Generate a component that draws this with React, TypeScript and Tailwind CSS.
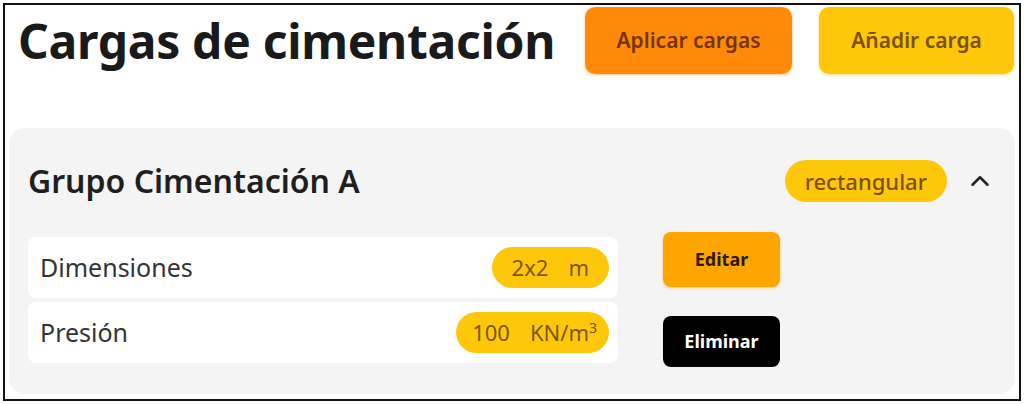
import { ChevronUp } from 'lucide-react';

const FONT = "font-['Noto_Sans',sans-serif]";

function Pill({ value, unit, className = '' }: { value: string; unit: React.ReactNode; className?: string }) {
  return (
    <span className={`h-[41px] rounded-full bg-[#ffc709] text-[#7a5800] text-[22px] flex items-center gap-[20px] ${className}`}>
      <span>{value}</span>
      <span>{unit}</span>
    </span>
  );
}

function Row({ label, children }: { label: string; children: React.ReactNode }) {
  return (
    <div className="h-[61px] bg-white rounded-lg pl-3 pr-[9px] flex items-center justify-between">
      <span className="text-[25px] text-[#333]">{label}</span>
      {children}
    </div>
  );
}

export default function App() {
  return (
    <div className={`${FONT} bg-white w-[1024px] h-[404px] p-[3px]`}>
      <div className="h-[398px] border-2 border-[#111] flex flex-col">
        {/* Header */}
        <div className="flex items-start pt-[2px] pl-[13px] pr-[5px] h-[123px]">
          <h1 className="text-[48px] tracking-[-0.3px] font-bold text-[#1a1a1a] leading-[60px] mt-[4px] flex-1">
            Cargas de cimentación
          </h1>
          <button className="w-[207px] h-[67px] rounded-[10px] bg-[#ff8a0a] text-[#7a3300] text-[21px] font-semibold shadow-[0_1px_3px_rgba(255,140,0,0.5)]">
            Aplicar cargas
          </button>
          <button className="w-[195px] h-[67px] ml-[27px] rounded-[10px] bg-[#ffc709] text-[#7a5200] text-[21px] font-semibold shadow-[0_1px_3px_rgba(255,199,9,0.5)]">
            Añadir carga
          </button>
        </div>

        {/* Group panel */}
        <div className="mx-[4px] h-[266px] bg-[#f4f4f4] rounded-2xl pl-[19px] pr-[20px] pt-[32px]">
          <div className="flex items-center h-[42px]">
            <h2 className="text-[32px] font-semibold text-[#1f1f1f] flex-1">Grupo Cimentación A</h2>
            <span className="h-[42px] px-[20px] rounded-full bg-[#ffc709] text-[#7a5200] text-[22px] font-medium flex items-center">
              rectangular
            </span>
            <ChevronUp size={30} strokeWidth={2} className="ml-[18px] text-[#222]" />
          </div>

          <div className="flex mt-[35px]">
            <div className="w-[590px] flex flex-col gap-1">
              <Row label="Dimensiones">
                <Pill value="2x2" unit="m" className="px-[20px]" />
              </Row>
              <Row label="Presión">
                <Pill
                  value="100"
                  unit={<>KN/m<sup className="text-[14px] -top-[8px]">3</sup></>}
                  className="pl-[16px] pr-[12px]"
                />
              </Row>
            </div>
            <div className="ml-[45px] flex flex-col gap-[29px] -mt-[5px]">
              <button className="w-[117px] h-[55px] rounded-lg bg-[#ffa500] text-[#2e1800] text-[18px] font-bold shadow-[0_1px_3px_rgba(255,165,0,0.5)]">
                Editar
              </button>
              <button className="w-[117px] h-[51px] rounded-lg bg-black text-white text-[18px] font-bold">
                Eliminar
              </button>
            </div>
          </div>
        </div>
      </div>
    </div>
  );
}
